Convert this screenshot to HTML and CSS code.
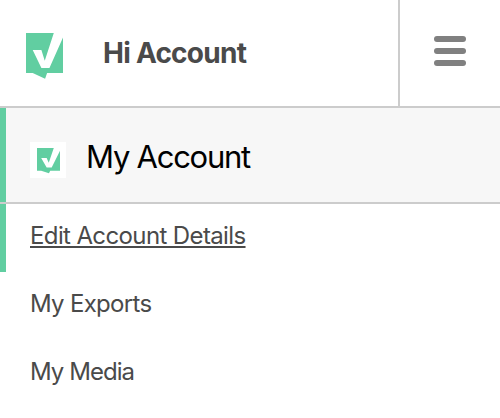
FILE: index.html
```html
<!DOCTYPE html>
<html lang="en">
<head>
  <meta charset="UTF-8" />
  <meta name="viewport" content="width=device-width, initial-scale=1" />
  <title>My Account</title>
  <link rel="stylesheet" href="styles.css">
</head>
<body>

  <!-- Top bar -->
  <header class="topbar">
    <div class="greeting">
      <svg class="logo" viewBox="0 0 112 138" preserveAspectRatio="none" aria-hidden="true">
        <path d="M0 0H83L56 83L46 51H20L46 105H70L112 10V120H63L57 137L20 120H0Z" />
      </svg>
      <span class="greeting-text">Hi Account</span>
    </div>
    <button class="menu-button" aria-label="Menu">
      <span class="bar"></span>
      <span class="bar"></span>
      <span class="bar"></span>
    </button>
  </header>

  <!-- Account menu -->
  <nav>
    <h1 class="section">
      <span class="section-icon">
        <svg class="logo-small" viewBox="0 0 112 138" preserveAspectRatio="none" aria-hidden="true">
          <path d="M0 0H80L56 80L46 54H20L46 105H70L112 10V123H63L57 137L20 123H0Z" />
        </svg>
      </span>
      <span class="section-text">My Account</span>
    </h1>
    <ul class="links">
      <li class="item active"><a class="link" href="#">Edit Account Details</a></li>
      <li class="item"><a class="link exports" href="#">My Exports</a></li>
      <li class="item"><a class="link media" href="#">My Media</a></li>
    </ul>
  </nav>

</body>
</html>
```

FILE: styles.css
```css
* {
  box-sizing: border-box;
}

body {
  margin: 0;
  height: 100vh;
  overflow: hidden;
  background: #fff;
  color: #4a4a4a;
  font-family: Inter, "Liberation Sans", sans-serif;
}

/* Top bar */
.topbar {
  display: flex;
  height: 108px;
  border-bottom: 2px solid #ccc;
}

.greeting {
  display: flex;
  flex: 1;
  align-items: center;
  padding: 6px 0 0 25.5px;
}

.logo {
  width: 37.5px;
  height: 46px;
  fill: #61cea1;
}

.greeting-text {
  margin: -7px 0 0 40px;
  font-size: 28px;
  font-weight: 700;
  letter-spacing: -0.75px;
  white-space: nowrap;
}

.menu-button {
  display: flex;
  flex-direction: column;
  align-items: center;
  gap: 6px;
  width: 102px;
  padding: 36px 0 0;
  border: 0;
  border-left: 2px solid #ccc;
  background: #fff;
}

.bar {
  width: 32px;
  height: 6px;
  border-radius: 3px;
  background: #808080;
}

/* Section heading */
.section {
  display: flex;
  align-items: center;
  height: 96px;
  margin: 0;
  padding-left: 30px;
  border-bottom: 2px solid #ccc;
  background: linear-gradient(to right, #61cea1 6px, #f7f7f7 6px);
  color: #000;
  font-size: 31px;
  font-weight: 400;
}

.section-icon {
  width: 36px;
  height: 36px;
  margin-top: 10px;
  padding: 6px 0 0 6.5px;
  background: #fff;
}

.logo-small {
  display: block;
  width: 23.5px;
  height: 25.5px;
  fill: #61cea1;
}

.section-text {
  margin: 3px 0 0 20px;
  letter-spacing: -1.25px;
}

/* Links */
.links {
  margin: 0;
  padding: 0;
  list-style: none;
}

.item {
  display: flex;
  align-items: center;
  height: 68px;
  padding: 0 0 6px 30px;
}

.item.active {
  background: linear-gradient(to right, #61cea1 6px, #fff 6px);
}

.link {
  color: inherit;
  font-size: 24px;
  letter-spacing: -0.62px;
  text-decoration: none;
}

.exports {
  letter-spacing: -0.7px;
}

.media {
  letter-spacing: -0.95px;
}

.active .link {
  text-decoration: underline;
  text-decoration-thickness: 2px;
  text-decoration-skip-ink: none;
  text-underline-offset: 2px;
}
```
